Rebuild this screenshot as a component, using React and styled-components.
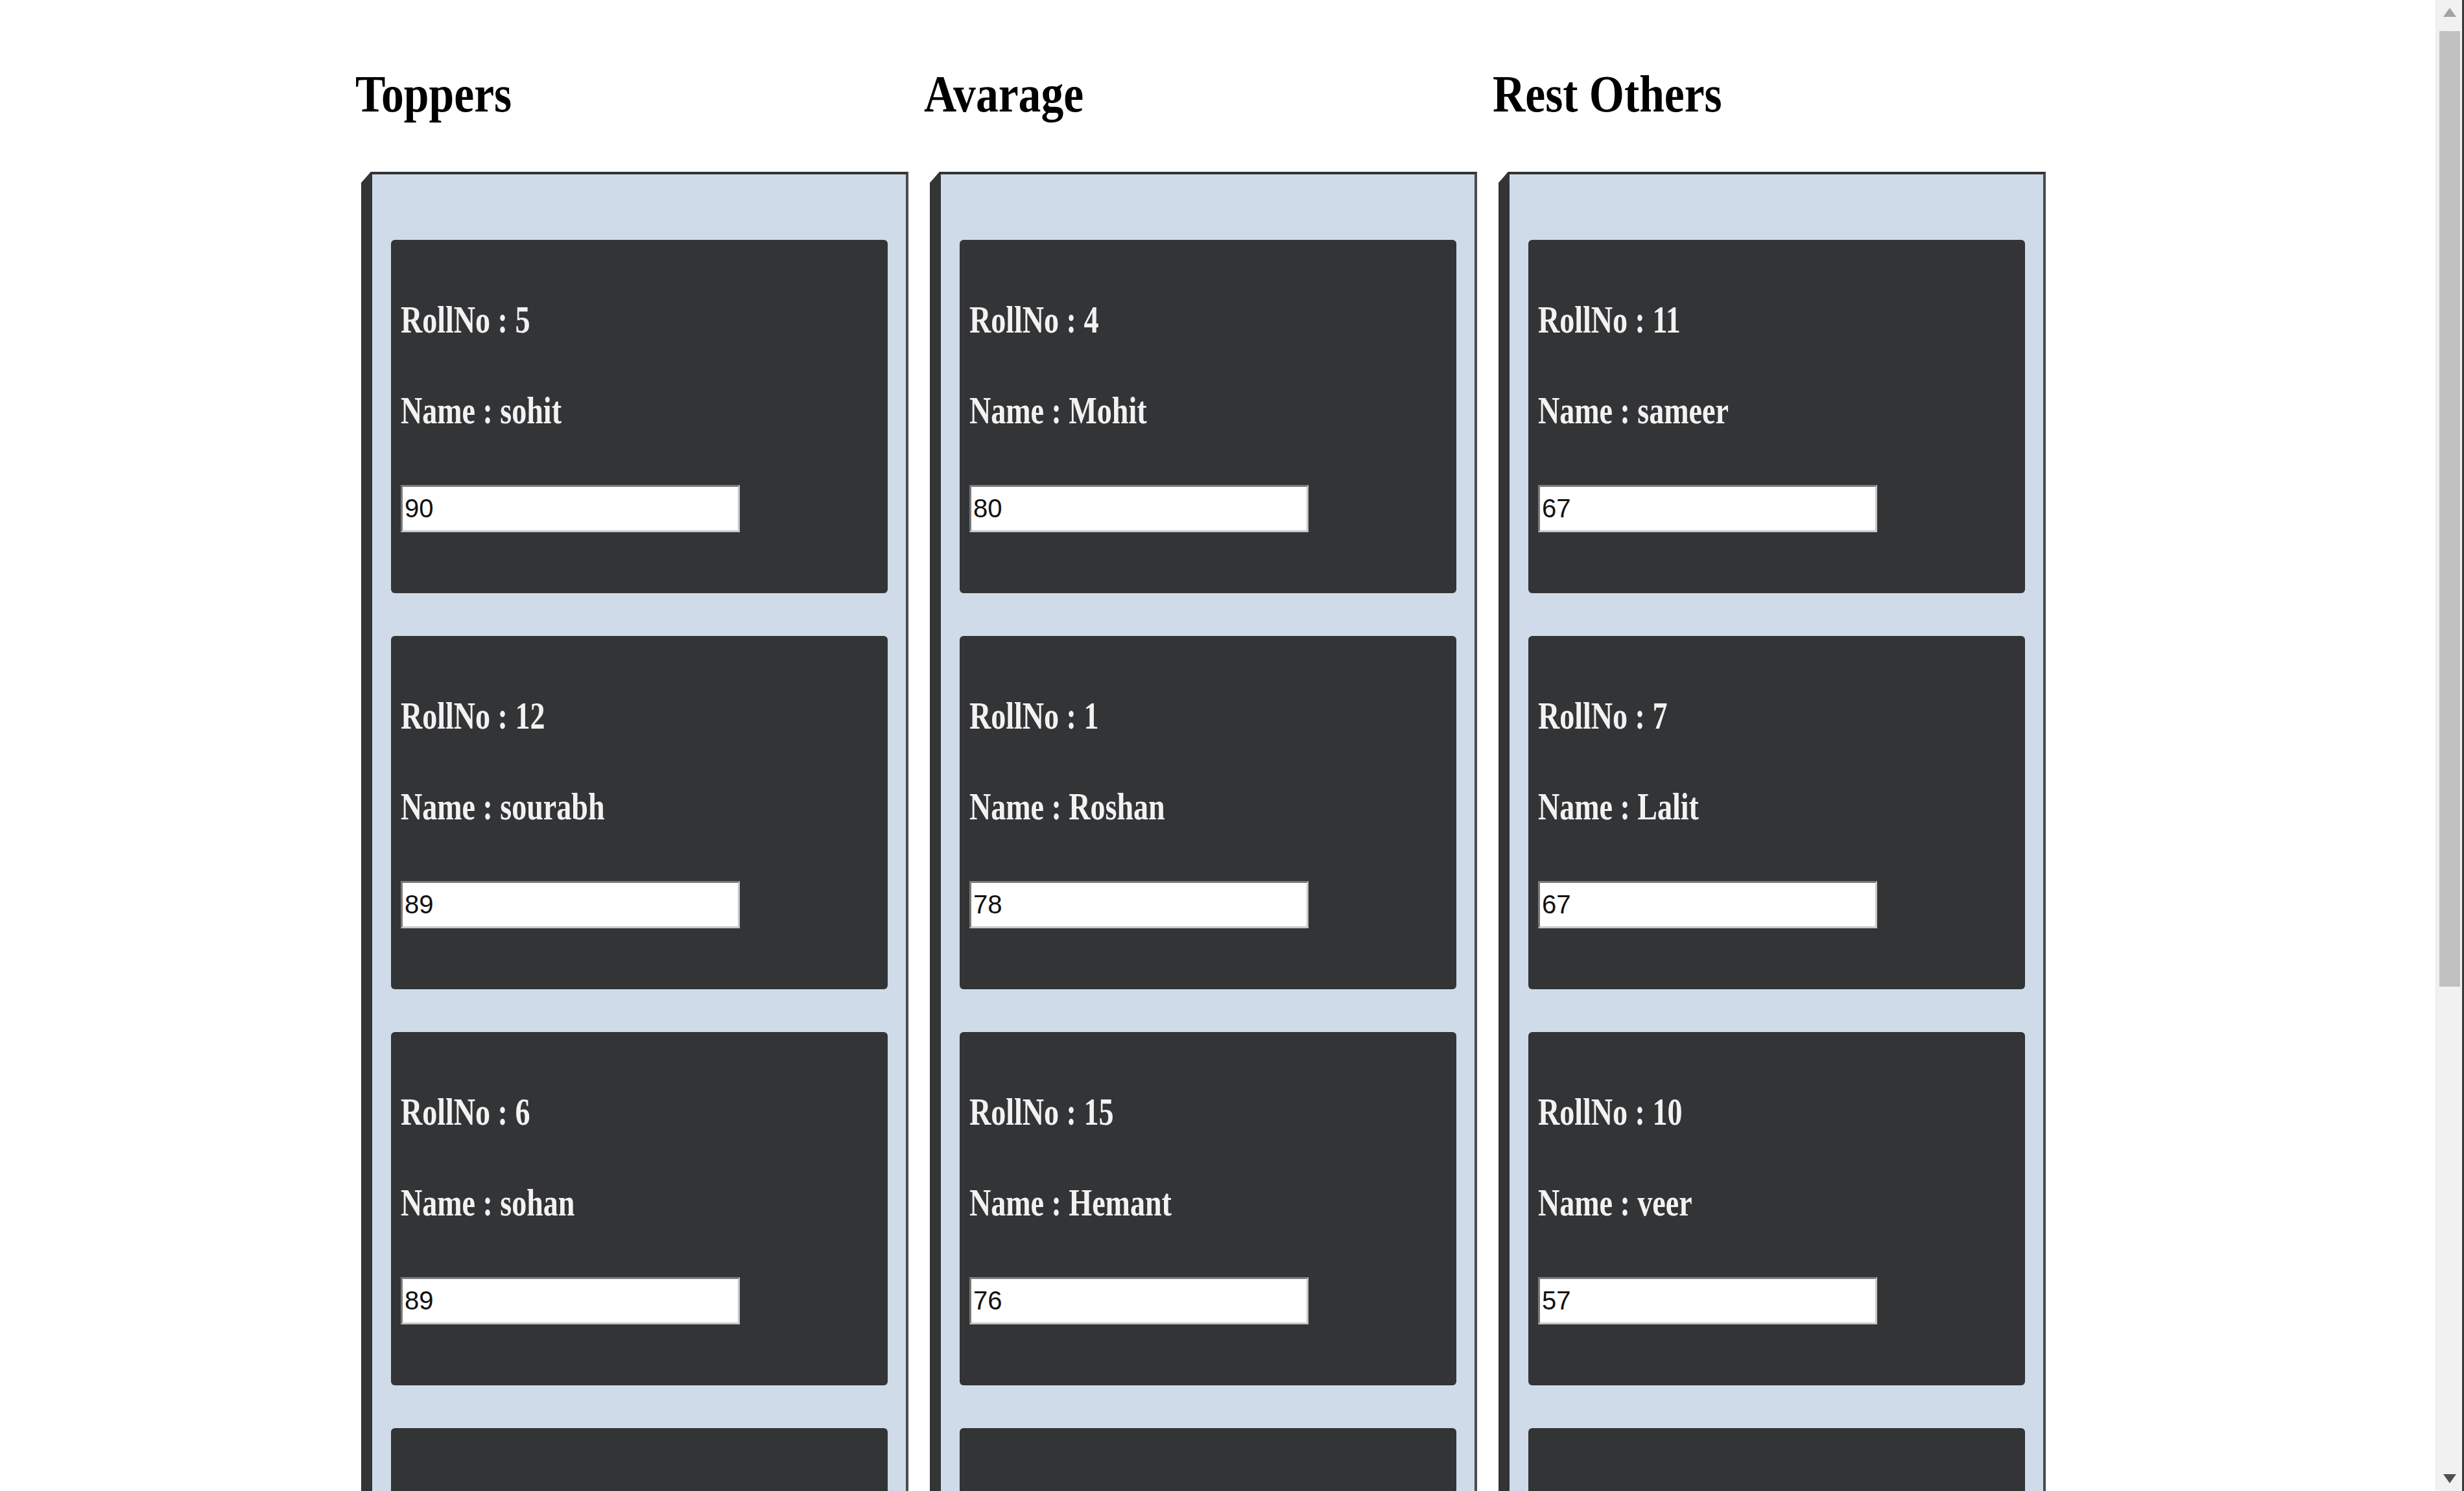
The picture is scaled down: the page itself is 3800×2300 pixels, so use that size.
import React from 'react'
import styled, { createGlobalStyle } from 'styled-components'

const GlobalStyle = createGlobalStyle`
    html, body {
        margin: 0;
        padding: 0;
        background: #ffffff;
        overflow: hidden;
    }
    body {
        font-family: "Liberation Serif", "Times New Roman", serif;
    }
`

const Page = styled.div`
    display: flex;
    gap: 24px;
    padding: 105px 0 0 548px;
    height: 2300px;
    box-sizing: border-box;
    overflow: hidden;
`

const Column = styled.section`
    width: 853px;
    display: flex;
    flex-direction: column;
`

const Heading = styled.h1`
    margin: 0 0 80px;
    height: 80px;
    font-size: 80px;
    line-height: 80px;
    font-weight: bold;
    color: #000;
    white-space: nowrap;
`

const Squeezed = styled.span`
    display: inline-block;
    transform: scaleX(${p => p.$x || 0.8});
    transform-origin: left center;
`

const List = styled.div`
    margin-left: 9px;
    width: 844px;
    box-sizing: border-box;
    background: #cfdbe9;
    border-top: 4px solid #333436;
    border-right: 4px solid #4a4b4d;
    border-left: 17px solid #333436;
    border-bottom: 4px solid #333436;
    clip-path: polygon(15px 0, 100% 0, 100% 100%, 0 100%, 0 17px);
    padding: 101px 28px 66px 29px;
    display: flex;
    flex-direction: column;
    gap: 66px;
`

const Card = styled.div`
    height: 545px;
    box-sizing: border-box;
    background: #333436;
    border-radius: 6px;
    padding: 94px 15px 0;
    display: flex;
    flex-direction: column;
    align-items: flex-start;
`

const Label = styled.h3`
    margin: 0 0 ${p => p.$gap}px;
    height: 59px;
    font-size: 59px;
    line-height: 59px;
    font-weight: bold;
    color: #f2f2f2;
    white-space: nowrap;
`

const Marks = styled.input`
    width: 523px;
    height: 73px;
    box-sizing: border-box;
    border: 3px solid #8d8d8d;
    border-color: #7a7a7a #c8c8c8 #c8c8c8 #7a7a7a;
    background: #fff;
    padding: 0 0 0 3px;
    font-family: "Liberation Sans", Arial, sans-serif;
    font-size: 40px;
    color: #111;
    outline: none;
`

const Scrollbar = styled.div`
    position: fixed;
    top: 0;
    right: 0;
    width: 44px;
    height: 2300px;
    background: #f1f1f1;
    border-left: 1px solid #e8e8e8;
    border-right: 3px solid #3a3a3a;
    box-sizing: border-box;
`

const Thumb = styled.div`
    position: absolute;
    top: 48px;
    left: 5px;
    width: 32px;
    height: 1474px;
    background: #c1c1c1;
`

const Arrow = styled.div`
    position: absolute;
    left: 11px;
    width: 0;
    height: 0;
    border-left: 10px solid transparent;
    border-right: 10px solid transparent;
    ${p => p.$down
        ? 'bottom: 12px; border-top: 14px solid #505050;'
        : 'top: 12px; border-bottom: 14px solid #a3a3a3;'}
`

const columns = [
    {
        title: 'Toppers',
        students: [
            { roll: 5, name: 'sohit', marks: 90 },
            { roll: 12, name: 'sourabh', marks: 89 },
            { roll: 6, name: 'sohan', marks: 89 },
            { roll: 3, name: 'rohit', marks: 85 },
        ],
    },
    {
        title: 'Avarage',
        students: [
            { roll: 4, name: 'Mohit', marks: 80 },
            { roll: 1, name: 'Roshan', marks: 78 },
            { roll: 15, name: 'Hemant', marks: 76 },
            { roll: 9, name: 'Amit', marks: 72 },
        ],
    },
    {
        title: 'Rest Others',
        students: [
            { roll: 11, name: 'sameer', marks: 67 },
            { roll: 7, name: 'Lalit', marks: 67 },
            { roll: 10, name: 'veer', marks: 57 },
            { roll: 2, name: 'karan', marks: 50 },
        ],
    },
]

function StudentCard({ student }) {
    return (
        <Card>
            <Label $gap={81}><Squeezed $x={0.78}>RollNo : {student.roll}</Squeezed></Label>
            <Label $gap={85}><Squeezed $x={0.78}>Name : {student.name}</Squeezed></Label>
            <Marks type="text" defaultValue={student.marks} />
        </Card>
    )
}

export default function App() {
    return (
        <>
            <GlobalStyle />
            <Page>
                {columns.map(col => (
                    <Column key={col.title}>
                        <Heading><Squeezed $x={0.87}>{col.title}</Squeezed></Heading>
                        <List>
                            {col.students.map(s => (
                                <StudentCard key={s.roll} student={s} />
                            ))}
                        </List>
                    </Column>
                ))}
            </Page>
            <Scrollbar>
                <Arrow />
                <Thumb />
                <Arrow $down />
            </Scrollbar>
        </>
    )
}
